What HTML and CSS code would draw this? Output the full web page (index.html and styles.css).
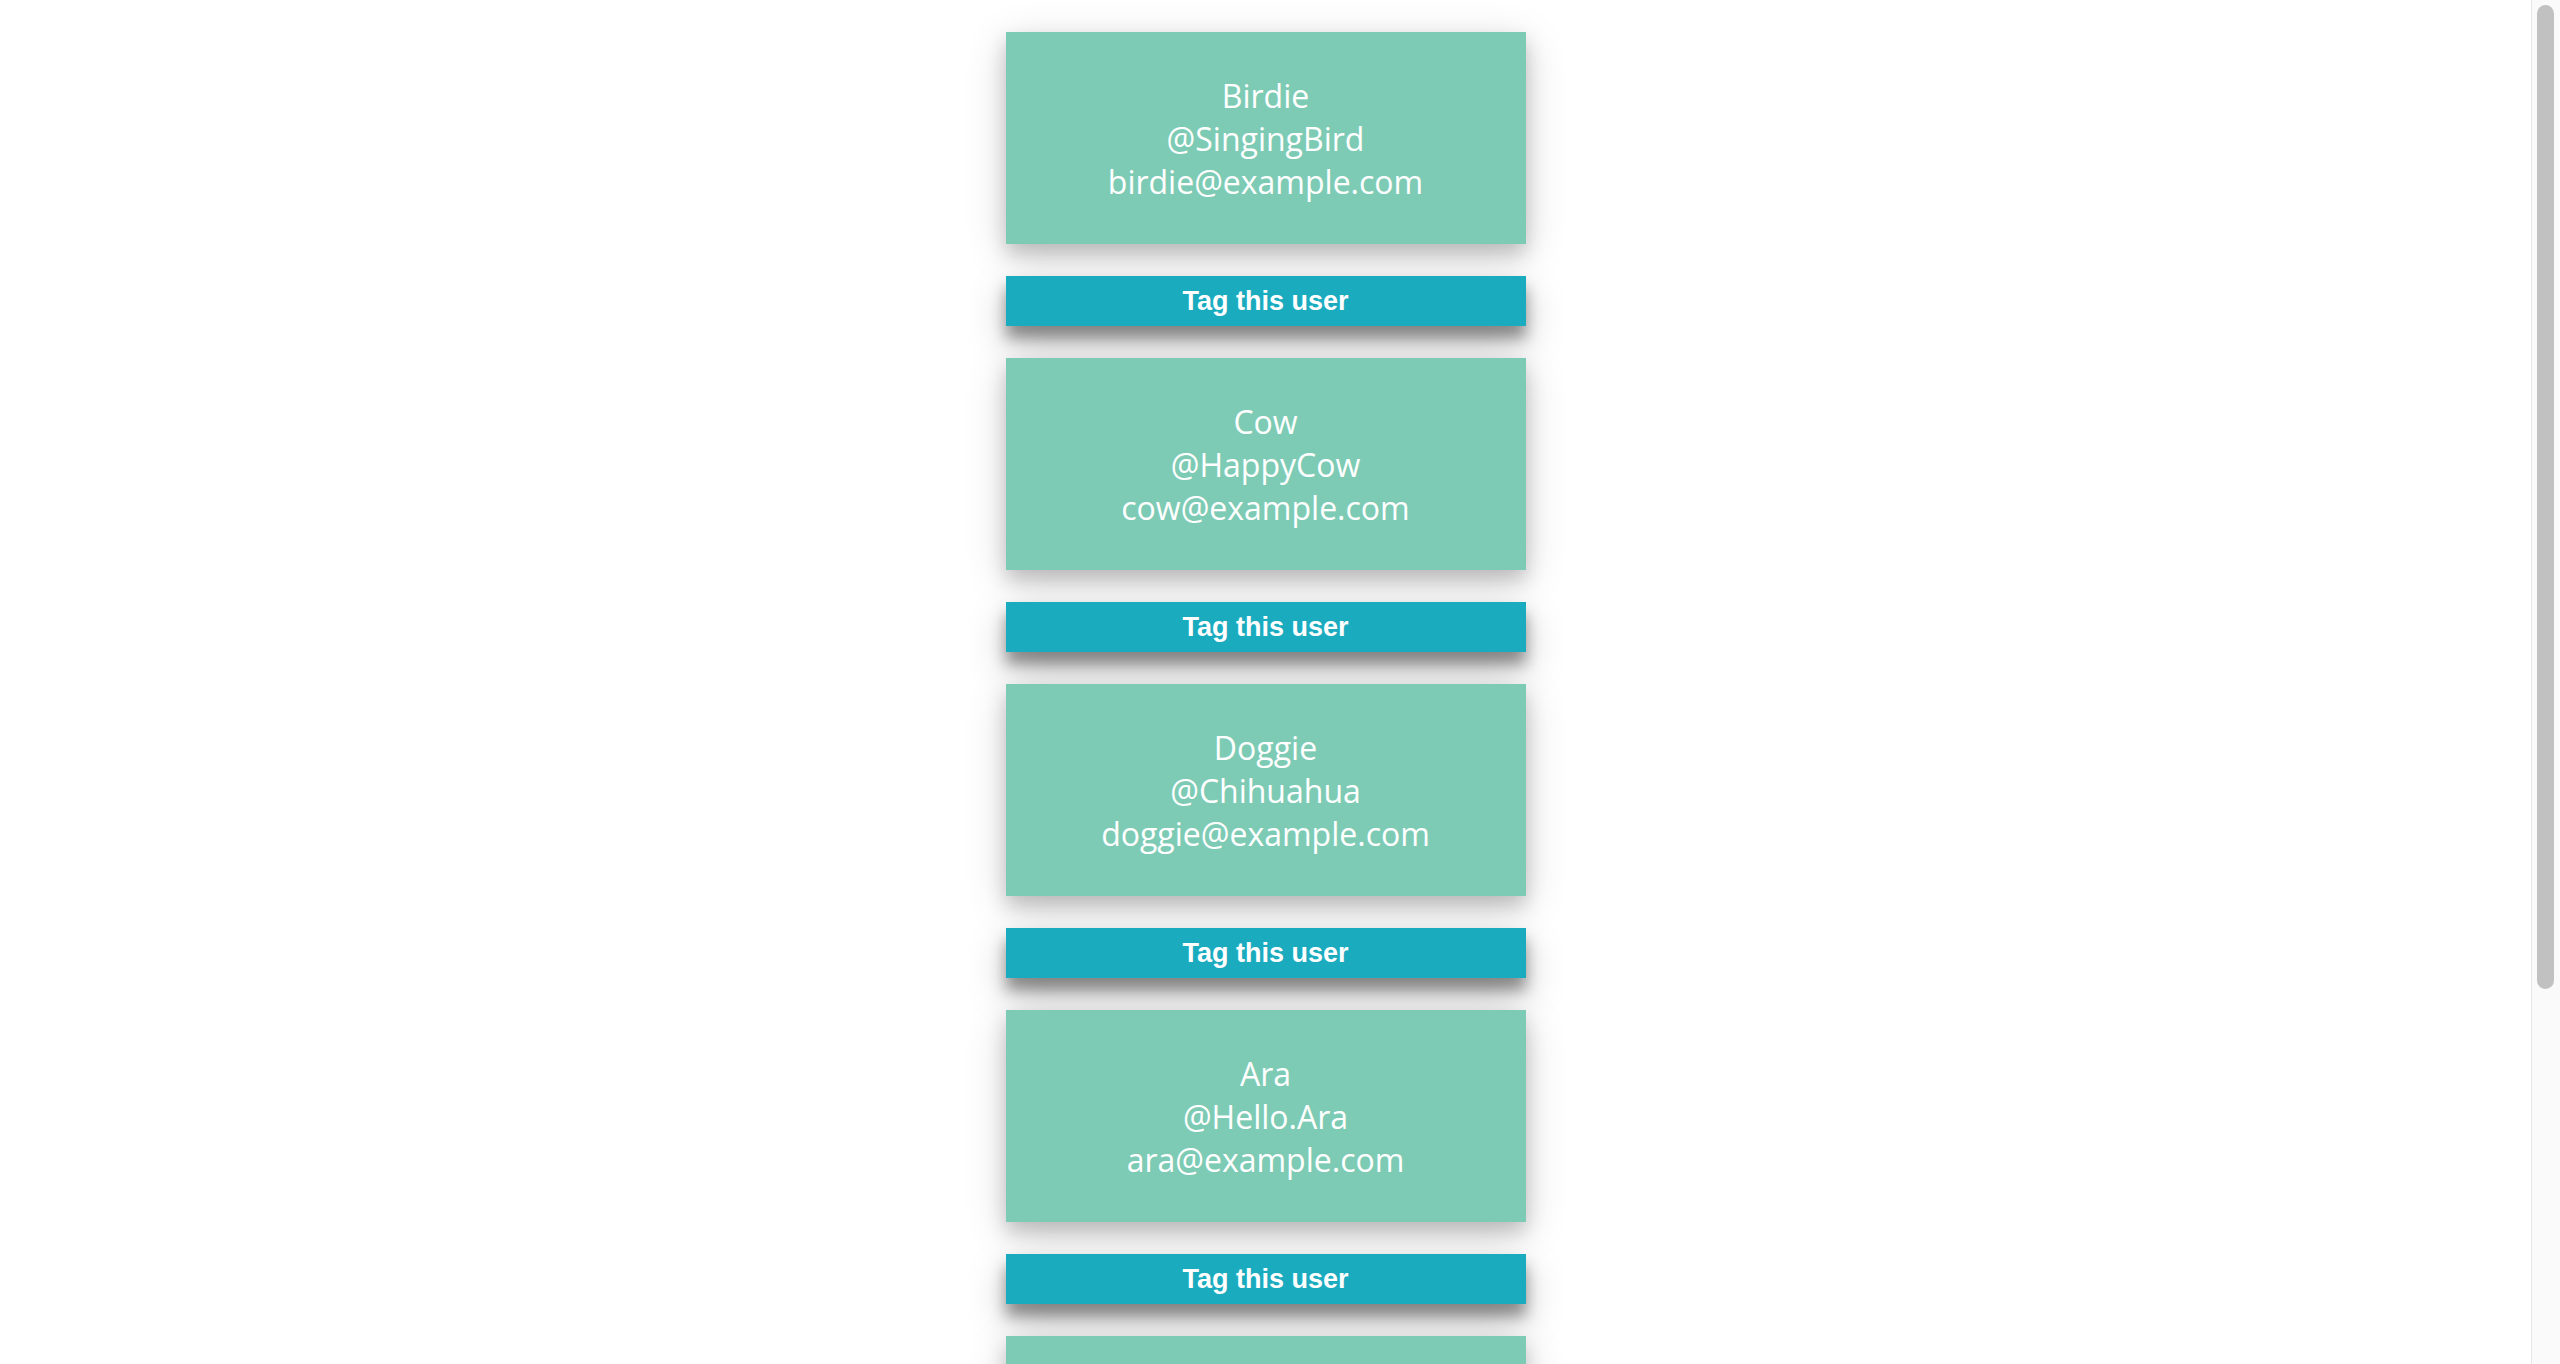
FILE: index.html
```html
<!DOCTYPE html>
<html lang="en">
<head>
<meta charset="utf-8">
<title>Users</title>
<link rel="stylesheet" href="styles.css">
</head>
<body>
<div class="page">
<main class="list">
  <section class="user">
    <div class="card">
      <div class="line">Birdie</div>
      <div class="line">@SingingBird</div>
      <div class="line">birdie@example.com</div>
    </div>
    <button class="tag">Tag this user</button>
  </section>
  <section class="user">
    <div class="card">
      <div class="line">Cow</div>
      <div class="line">@HappyCow</div>
      <div class="line">cow@example.com</div>
    </div>
    <button class="tag">Tag this user</button>
  </section>
  <section class="user">
    <div class="card">
      <div class="line">Doggie</div>
      <div class="line">@Chihuahua</div>
      <div class="line">doggie@example.com</div>
    </div>
    <button class="tag">Tag this user</button>
  </section>
  <section class="user">
    <div class="card">
      <div class="line">Ara</div>
      <div class="line">@Hello.Ara</div>
      <div class="line">ara@example.com</div>
    </div>
    <button class="tag">Tag this user</button>
  </section>
  <section class="user">
    <div class="card">
      <div class="line">Kitty</div>
      <div class="line">@CuteKitty</div>
      <div class="line">kitty@example.com</div>
    </div>
    <button class="tag">Tag this user</button>
  </section>
</main>
</div>
<div class="scrollbar" aria-hidden="true"><div class="thumb"></div></div>
</body>
</html>
```

FILE: styles.css
```css
html, body {
  margin: 0;
  height: 100%;
  overflow: hidden;
  background: #ffffff;
}
body {
  display: flex;
  font-family: "Open Sans", "Noto Sans", sans-serif;
}
.page {
  flex: 1;
  min-width: 0;
  height: 100%;
  overflow: hidden;
}
.scrollbar {
  flex: 0 0 29px;
  box-sizing: border-box;
  height: 100%;
  background: #fafafa;
  border-left: 1px solid #e8e8e8;
  padding: 5px 6px 0 5px;
}
.thumb {
  height: 984px;
  background: #c1c1c1;
  border-radius: 9px;
}
.list {
  display: flex;
  flex-direction: column;
  align-items: center;
  gap: 32px;
  padding: 32px 0 210px;
}
.user {
  display: flex;
  flex-direction: column;
  gap: 32px;
  width: 520px;
}
.card {
  height: 212px;
  background: #7ecbb5;
  color: #ffffff;
  font-size: 32px;
  text-align: center;
  display: flex;
  flex-direction: column;
  justify-content: center;
  box-shadow: 0 10px 18px rgba(0, 0, 0, 0.18), 0 10px 40px rgba(0, 0, 0, 0.16);
}
.tag {
  height: 50px;
  border: none;
  margin: 0;
  padding: 0;
  background: #1babbf;
  color: #ffffff;
  font-family: "Liberation Sans", Arial, sans-serif;
  font-weight: bold;
  font-size: 27px;
  box-shadow: 0 12px 14px rgba(0, 0, 0, 0.38), 0 16px 40px rgba(0, 0, 0, 0.22);
}
```
